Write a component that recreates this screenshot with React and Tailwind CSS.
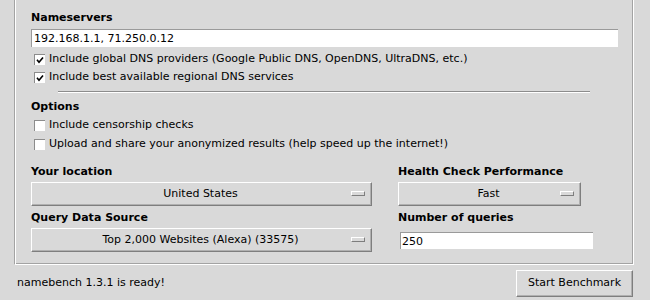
import React from 'react';

const font = { fontFamily: '"DejaVu Sans", "Liberation Sans", sans-serif' };

const CheckBox = ({ checked }) => (
  <span className="w-[11px] h-[11px] bg-white border-t border-l border-[#8c8c8c] flex items-center justify-center">
    {checked && (
      <svg width="8" height="8" viewBox="0 0 8 8">
        <path d="M1 3.8 L3 6.2 L7 1.4" stroke="#000" strokeWidth="1.6" fill="none" />
      </svg>
    )}
  </span>
);

const Option = ({ checked, label, className = '' }) => (
  <div className={`flex items-center h-[18px] pl-[3px] gap-[4px] ${className}`}>
    <CheckBox checked={checked} />
    <span>{label}</span>
  </div>
);

const Select = ({ value, width }) => (
  <div
    className={`${width} h-[24px] flex items-center border border-t-white border-l-white border-r-[#7e7e7e] border-b-[#7e7e7e] shadow-[inset_-1px_-1px_0_#b0b0b0] relative`}
  >
    <span className="flex-1 text-center pr-[2px]">{value}</span>
    <span className="absolute right-[6px] top-[8px] w-[14px] h-[5px] border border-t-white border-l-white border-r-[#7e7e7e] border-b-[#7e7e7e] bg-[#d9d9d9]" />
  </div>
);

const Label = ({ children, className = '' }) => (
  <div className={`font-bold h-[15px] leading-[15px] ${className}`}>{children}</div>
);

export default function App() {
  return (
    <div className="w-[650px] h-[300px] bg-[#d9d9d9] overflow-hidden text-[11px] text-black" style={font}>
      {/* settings frame, top edge is cut off */}
      <div className="ml-[14px] w-[620px] h-[265px] pt-[10px] border-l border-l-[#a3a3a3] border-r border-r-white border-b border-b-white shadow-[inset_1px_0_0_#fff,inset_-1px_-1px_0_#a3a3a3] pl-[16px]">
        <Label>Nameservers</Label>
        <div className="mt-[4px] w-[587px] h-[18px] bg-white border-t border-l border-[#9a9a9a] flex items-center pl-[2px] leading-none">
          192.168.1.1, 71.250.0.12
        </div>
        <Option className="mt-[3px]" checked label="Include global DNS providers (Google Public DNS, OpenDNS, UltraDNS, etc.)" />
        <Option checked label="Include best available regional DNS services" />
        <div className="ml-[27px] mt-[5px] w-[532px] h-[2px] border-t border-t-[#8c8c8c] border-b border-b-white" />

        <Label className="mt-[6px]">Options</Label>
        <Option className="mt-[2px]" label="Include censorship checks" />
        <Option className="mt-[1px]" label="Upload and share your anonymized results (help speed up the internet!)" />

        <div className="flex mt-[11px]">
          <div className="w-[367px]">
            <Label>Your location</Label>
            <div className="mt-[3px]">
              <Select value="United States" width="w-[341px]" />
            </div>
            <Label className="mt-[4px]">Query Data Source</Label>
            <div className="mt-[3px]">
              <Select value="Top 2,000 Websites (Alexa) (33575)" width="w-[341px]" />
            </div>
          </div>
          <div>
            <Label>Health Check Performance</Label>
            <div className="mt-[3px]">
              <Select value="Fast" width="w-[183px]" />
            </div>
            <Label className="mt-[4px]">Number of queries</Label>
            <div className="mt-[7px] ml-[2px] w-[193px] h-[17px] bg-white border-t border-l border-[#9a9a9a] flex items-center pl-[1px] leading-none">
              250
            </div>
          </div>
        </div>
      </div>

      {/* status bar */}
      <div className="flex items-center justify-between pl-[17px] pr-[17px] mt-[5px]">
        <span>namebench 1.3.1 is ready!</span>
        <button className="w-[117px] h-[27px] border border-t-white border-l-white border-r-[#7e7e7e] border-b-[#7e7e7e] shadow-[inset_-1px_-1px_0_#b0b0b0] bg-[#d9d9d9]">
          Start Benchmark
        </button>
      </div>
    </div>
  );
}
